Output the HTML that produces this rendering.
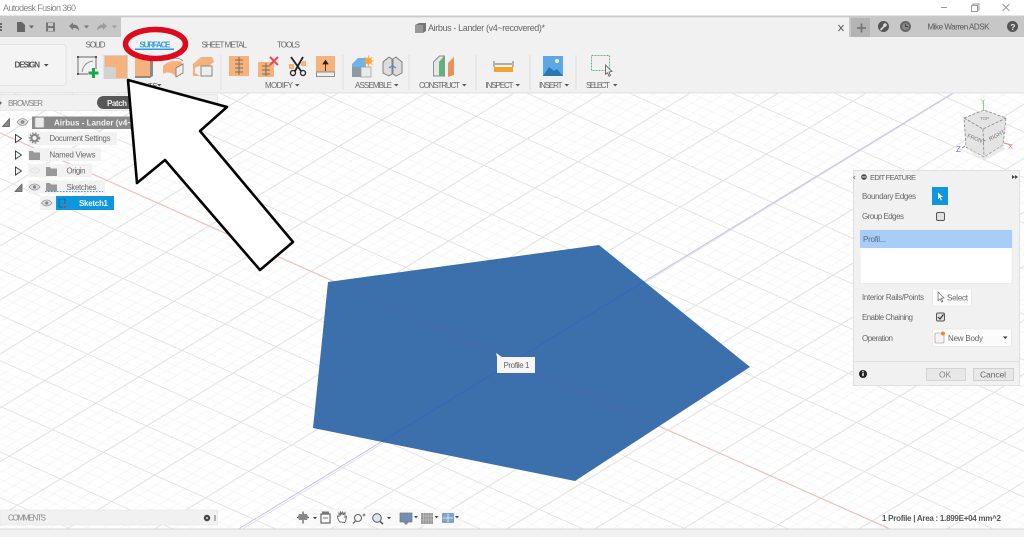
<!DOCTYPE html>
<html><head><meta charset="utf-8"><title>Autodesk Fusion 360</title>
<style>
html,body{margin:0;padding:0;background:#fff;width:1024px;height:537px;overflow:hidden}
svg{display:block;filter:blur(.35px)}
text{font-family:"Liberation Sans",sans-serif;fill:#666;font-size:8px}
</style></head><body>
<svg width="1024" height="537" viewBox="0 0 1024 537" xmlns="http://www.w3.org/2000/svg">
<defs>
<pattern id="g" width="100" height="100" patternUnits="userSpaceOnUse" patternTransform="matrix(.51 .227 -.4314 .2643 80 305)">
<path d="M20 0V100M40 0V100M60 0V100M80 0V100M0 20H100M0 40H100M0 60H100M0 80H100" stroke="#f3f3f3" stroke-width="1.400" fill="none"/>
<path d="M0 0V100M0 0H100M100 0V100M0 100H100" stroke="#e0e0e0" stroke-width="2.200" fill="none"/>
</pattern>
<clipPath id="pc"><polygon points="328,282 599,245 750,367 575,481 313,428"/></clipPath>
</defs>
<rect width="1024" height="537" fill="#fff"/>
<!-- viewport -->
<rect y="92" width="1024" height="437" fill="url(#g)"/>
<line x1="0" y1="133" x2="892" y2="530" stroke="#f5bcbc" stroke-width="1"/>
<line x1="953" y1="93" x2="237" y2="530" stroke="#c2c2f0" stroke-width="1"/>
<polygon points="328,282 599,245 750,367 575,481 313,428" fill="#3c70ad"/>
<g clip-path="url(#pc)">
<line x1="0" y1="133" x2="892" y2="530" stroke="#5a689f" stroke-width="1" opacity=".45"/>
<line x1="953" y1="93" x2="237" y2="530" stroke="#3265bd" stroke-width="1.200" opacity=".7"/>
</g>
<!-- top -->
<text x="3" y="11" style="fill:#8a8a8a;font-size:9px" textLength="73">Autodesk Fusion 360</text>
<path d="M941 7.500H947" stroke="#999" stroke-width="1"/>
<path d="M971.500 5.500h6v6h-6zM973 5.500v-1.500h6v6h-1.500" stroke="#999" fill="none" stroke-width="1"/>
<path d="M1002.500 4l7 7M1009.500 4l-7 7" stroke="#999" fill="none" stroke-width="1"/>
<rect y="15.500" width="1024" height="2" fill="#c9c9c9"/>
<rect y="17" width="121" height="20" fill="#c7c7c7"/>
<rect x="849" y="17" width="175" height="20" fill="#c7c7c7"/>
<rect x="121" y="18" width="728" height="19" fill="#f1f1f1"/>
<rect y="37" width="1024" height="55" fill="#f1f1f1"/>
<rect y="92" width="1024" height="1.500" fill="#e6e6e6"/>
<!-- quick access -->
<path d="M0 23h2v2H0zM0 26h2v2H0zM0 29h2v2H0z" fill="#666"/>
<path d="M17 22h5l3 3v7h-8z" fill="#666"/>
<path d="M29 25.500h5l-2.500 3z" fill="#666"/>
<path d="M46 22.500h9v9h-9z" fill="#777"/><rect x="48" y="23" width="5" height="3" fill="#c7c7c7"/><rect x="48" y="28" width="5" height="3" fill="#c7c7c7"/>
<path d="M69 26l4-3.500v2c4 0 6 2 6 6.500-1.500-2.500-3-3-6-3v2z" fill="#777"/>
<path d="M84 25.500h5l-2.500 3z" fill="#777"/>
<path d="M107 26l-4-3.500v2c-4 0-6 2-6 6.500 1.500-2.500 3-3 6-3v2z" fill="#9c9c9c"/>
<path d="M112 25.500h5l-2.500 3z" fill="#999"/>
<!-- doc title -->
<path d="M415 25l4-2h7v8l-3 2h-8z" fill="#777"/><path d="M415 25h8v8h-8z" fill="#999"/>
<text x="428" y="31" style="font-size:9px;fill:#666" textLength="117">Airbus - Lander (v4~recovered)*</text>
<path d="M838.500 25l5 6M843.500 25l-5 6" stroke="#666" stroke-width="1.100"/>
<rect x="851" y="18" width="19" height="19" fill="#b4b4b4"/>
<path d="M857 28h9M861.500 23.500v9" stroke="#777" stroke-width="1.800"/>
<circle cx="883.500" cy="26.500" r="5.500" fill="#555"/><path d="M880.500 30l4-4" stroke="#ddd" stroke-width="1.600"/><circle cx="885" cy="25" r="1.800" fill="#ddd"/>
<circle cx="905.500" cy="26.500" r="5.500" fill="#666"/><circle cx="905.500" cy="26.500" r="3.500" fill="#888"/><path d="M905.500 24v2.500h2.500" stroke="#333" fill="none" stroke-width=".8"/>
<text x="927.500" y="29.500" style="font-size:8px;fill:#555" textLength="62">Mike Warren ADSK</text>
<circle cx="1012.500" cy="26.500" r="5.500" fill="#555"/><text x="1010.200" y="30" style="font-size:8.500px;font-weight:bold;fill:#eee">?</text>
<!-- tabs -->
<text x="85.500" y="47.500" style="font-size:8px;fill:#666" textLength="20">SOLID</text>
<text x="139.500" y="47.500" style="font-size:8px;fill:#2f9fdb;font-weight:bold" textLength="31">SURFACE</text>
<rect x="135" y="48.500" width="39" height="1.500" fill="#2a9bd8"/>
<text x="201.500" y="47.500" style="font-size:8px;fill:#666" textLength="45.500">SHEET METAL</text>
<text x="277" y="47.500" style="font-size:8px;fill:#666" textLength="23">TOOLS</text>
<!-- design -->
<rect x="-4" y="44.500" width="70" height="41" rx="3" fill="#f4f4f4" stroke="#e3e3e3"/>
<text x="14.500" y="67.500" style="font-size:8px;font-weight:bold;fill:#555" textLength="25.500">DESIGN</text>
<path d="M44 64h4.500l-2.250 2.500z" fill="#444"/>
<!-- separators -->
<path d="M221 55V90M343 55V90M409 55V90M476 55V90M530 55V90M576 55V90" stroke="#dedede" stroke-width="1"/>
<!-- sketch icon -->
<path d="M78 57h18v12M88 74h-10v-17" fill="none" stroke="#666" stroke-width=".9"/>
<path d="M82 72c1-6 4-10 11-11" fill="none" stroke="#777" stroke-width=".8"/>
<path d="M77 56h2v2h-2zM95 56h2v2h-2zM77 73h2v2h-2z" fill="#555"/>
<path d="M93.500 68v10M88.500 73h10" stroke="#1aa64a" stroke-width="3"/>
<!-- patch active -->
<rect x="103.500" y="55" width="24.500" height="24" fill="#d2d2d2"/>
<path d="M105 56h22v22h-11v-11h-11z" fill="#f6b27c"/>
<!-- extrude -->
<path d="M135 57h15v19h-15z" fill="#f6b27c"/><path d="M150 56l3 1v19l-3 2h-15v-2h15z" fill="#8a8a8a"/>
<!-- revolve -->
<path d="M163 66c5-5 12-6 19-4v8l-5 1-1 6c-3-4-8-6-13-3z" fill="#f5b07c"/><path d="M176 68l7-4v9l-7 4z" fill="#eee" stroke="#777" stroke-width=".8"/><path d="M167 60c5-2 12-3 16 1" fill="none" stroke="#888" stroke-width=".8"/>
<!-- loft -->
<path d="M193 64l8-7h11l2 5-5 4h-10l-4 2v5l5 3-7 0z" fill="#f6b27c"/><rect x="201" y="66" width="11" height="10" fill="#eee" stroke="#888"/>
<text x="148" y="88" style="font-size:7.500px;fill:#666">TE</text>
<path d="M157 84h4.500l-2.250 2.500z" fill="#555"/>
<!-- modify -->
<rect x="229" y="56" width="20" height="20" fill="#f6b27c"/>
<path d="M235 60h8M235 64h8M235 68h8M235 72h8M239 57v18" stroke="#7d6a58" stroke-width="1"/>
<rect x="258" y="62" width="16" height="15" fill="#f6b27c"/><path d="M262 66h8M262 70h8M262 74h8M266 63v13" stroke="#7d6a58" stroke-width="1"/>
<path d="M270 57l8 8M278 57l-8 8" stroke="#e8475a" stroke-width="2"/>
<path d="M291 57l10 14M303 57l-8 14" stroke="#222" stroke-width="1.800"/><circle cx="293" cy="73" r="2.500" fill="none" stroke="#222" stroke-width="1.300"/><circle cx="303" cy="73" r="2.500" fill="none" stroke="#222" stroke-width="1.300"/><rect x="289" y="64" width="5" height="5" fill="#f6b27c"/><rect x="301" y="61" width="5" height="5" fill="#f6b27c"/>
<rect x="316" y="56" width="19" height="16" fill="#f6b27c"/><rect x="316.500" y="72" width="18" height="4.500" fill="#eee" stroke="#777" stroke-width=".8"/><path d="M325.500 71v-9M323 64l2.500-3.500 2.500 3.500z" stroke="#222" fill="#222" stroke-width=".8"/>
<text x="265" y="88" style="font-size:8px;fill:#666" textLength="28">MODIFY</text><path d="M295 84h4.500l-2.250 2.500z" fill="#555"/>
<!-- assemble -->
<path d="M352 64l6-6h8v10h-14z" fill="#6fb2ec"/><path d="M352 67h9v10h-9z" fill="#8c9aa6"/><path d="M361 67h10v10h-10z" fill="#eaeaea" stroke="#999" stroke-width=".7"/><circle cx="368.500" cy="61" r="3.500" fill="#f6a83c"/><path d="M368.500 55.500v11M363 61h11M364.500 57l8 8M372.500 57l-8 8" stroke="#f6a83c" stroke-width=".8"/>
<path d="M383 62l6-5 3 2v15l-3 2-6-3z" fill="#ddd" stroke="#777" stroke-width=".9"/><path d="M402 62l-6-5-3 2v15l3 2 6-3z" fill="#ddd" stroke="#777" stroke-width=".9"/><path d="M389 68l3-2M396 68l-3-2" stroke="#4b90d0" stroke-width="1.200"/>
<text x="355" y="88" style="font-size:8px;fill:#666" textLength="37">ASSEMBLE</text><path d="M394 84h4.500l-2.250 2.500z" fill="#555"/>
<!-- construct -->
<path d="M433.500 62l6-6h5v20h-11z" fill="#e7e7e7" stroke="#888" stroke-width=".9"/><path d="M439 62l5-6v20l-5 0z" fill="#5fb37c"/><path d="M448 63l6-6v18l-6 2z" fill="#e8935c"/>
<text x="419" y="88" style="font-size:8px;fill:#666" textLength="41">CONSTRUCT</text><path d="M462 84h4.500l-2.250 2.500z" fill="#555"/>
<!-- inspect -->
<rect x="494" y="67" width="19" height="5" fill="#f2a32f"/><path d="M494 61v6M513 61v6M495 64h17" stroke="#666" stroke-width=".9"/>
<text x="485.500" y="88" style="font-size:8px;fill:#666" textLength="28">INSPECT</text><path d="M515.500 84h4.500l-2.250 2.500z" fill="#555"/>
<!-- insert -->
<rect x="543" y="56" width="20" height="20" fill="#5aa9e6"/><path d="M543 76l6-9 5 4 3-2 6 7z" fill="#2a77b8"/><circle cx="557" cy="61" r="2" fill="#f6e9a0"/>
<text x="539" y="88" style="font-size:8px;fill:#666" textLength="23.500">INSERT</text><path d="M564.500 84h4.500l-2.250 2.500z" fill="#555"/>
<!-- select -->
<rect x="591.500" y="55.500" width="18" height="15" fill="none" stroke="#5dbb85" stroke-width="1" stroke-dasharray="2 1"/>
<path d="M605.500 65l6.500 6.500-3 .5 1.500 3.500-1.500.7-1.500-3.500-2 1.500z" fill="#eee" stroke="#555" stroke-width=".8"/>
<text x="586" y="88" style="font-size:8px;fill:#666" textLength="24">SELECT</text><path d="M613 84h4.500l-2.250 2.500z" fill="#555"/>
<!-- browser panel -->
<rect x="0" y="94.500" width="217.500" height="16" fill="#f1f1f1" stroke="#e2e2e2" stroke-width=".7"/>
<circle cx="0" cy="103" r="1.500" fill="#666"/>
<text x="8" y="106" style="font-size:8px;fill:#888" textLength="35">BROWSER</text>
<rect x="97" y="96" width="68" height="13" rx="6.500" fill="#585858"/>
<text x="107" y="106" style="font-size:8px;font-weight:bold;fill:#eee" textLength="20">Patch</text>
<!-- tree -->
<path d="M2.500 126.500l7-8v8z" fill="#888" stroke="#555" stroke-width=".7"/>
<path d="M17 122c3-4.500 8-4.500 11 0-3 4.500-8 4.500-11 0z" fill="#ddd" stroke="#999" stroke-width=".8"/><circle cx="22.500" cy="122" r="1.800" fill="#888"/>
<rect x="32" y="116.500" width="106" height="12.500" fill="#8a8a8a"/>
<rect x="35" y="117.500" width="9" height="10" rx="1" fill="#eaeaea" stroke="#aaa" stroke-width=".6"/>
<text x="54" y="125.500" style="font-size:8px;font-weight:bold;fill:#f3f3f3" textLength="78">Airbus - Lander (v4~</text>
<rect x="28" y="132" width="89" height="13" fill="#f2f2f2"/>
<path d="M15.500 134.500l6 4-6 4z" fill="#fff" stroke="#333" stroke-width=".9"/>
<circle cx="34.500" cy="138" r="3.200" fill="none" stroke="#888" stroke-width="2.200"/><circle cx="34.500" cy="138" r="5" fill="none" stroke="#888" stroke-width="1.400" stroke-dasharray="1.500 1.500"/>
<text x="49.500" y="141" style="font-size:7.800px;fill:#666" textLength="61">Document Settings</text>
<rect x="28" y="148" width="73" height="13" fill="#f2f2f2"/>
<path d="M15.500 151l6 4-6 4z" fill="#fff" stroke="#333" stroke-width=".9"/>
<path d="M29 151h4l1 1.500h6v7.500h-11z" fill="#999"/>
<text x="49.500" y="157.500" style="font-size:7.800px;fill:#666" textLength="46">Named Views</text>
<rect x="28" y="164" width="64" height="13" fill="#f2f2f2"/>
<path d="M15.500 167l6 4-6 4z" fill="#fff" stroke="#333" stroke-width=".9"/>
<path d="M30 170.500c3-3.500 7-3.500 10 0-3 3.500-7 3.500-10 0z" fill="#eee" stroke="#ddd" stroke-width=".8"/>
<path d="M46 167h4l1 1.500h6v7.500h-11z" fill="#999"/>
<text x="66.500" y="173.500" style="font-size:7.800px;fill:#666" textLength="19">Origin</text>
<rect x="28" y="180.500" width="77" height="13" fill="#f2f2f2"/>
<path d="M15 191.500l7-7.500v7.500z" fill="#888" stroke="#555" stroke-width=".7"/>
<path d="M29 187c3-4 8-4 11 0-3 4-8 4-11 0z" fill="#ddd" stroke="#999" stroke-width=".8"/><circle cx="34.500" cy="187" r="1.600" fill="#888"/>
<path d="M46 183h4l1 1.500h6v7h-11z" fill="#999"/>
<text x="66.500" y="190" style="font-size:7.800px;fill:#666" textLength="30">Sketches</text>
<path d="M45 191.500H103" stroke="#4a8fd0" stroke-width="1" stroke-dasharray="1.500 1.500"/>
<rect x="40" y="196" width="16" height="14" fill="#f2f2f2"/>
<path d="M41.500 203c3-4 7.500-4 10.500 0-3 4-7.500 4-10.500 0z" fill="#ddd" stroke="#999" stroke-width=".8"/><circle cx="46.700" cy="203" r="1.600" fill="#888"/>
<rect x="56" y="196" width="58" height="14" fill="#0e97dd"/>
<path d="M59 199h6v8h-6z" fill="none" stroke="#075b8c" stroke-width=".7"/><path d="M63 207l3-3" stroke="#e8503a" stroke-width="1.500"/>
<text x="79" y="206" style="font-size:8px;font-weight:bold;fill:#f5fbff" textLength="29">Sketch1</text>
<!-- viewcube -->
<path d="M983.500 111v-11" stroke="#6fe07f" stroke-width="1"/>
<text x="980.500" y="104" style="font-size:7px;fill:#7be88a">Y</text>
<path d="M964 118l20-8 22 8-3 27-19 12-18-10z" fill="#e4e4e4"/>
<path d="M964 118l19 11 23-11M983 129l1 28" fill="none" stroke="#888" stroke-width=".8" stroke-dasharray="3 1.500"/>
<path d="M964 118l20-8 22 8-3 27-19 12-18-10z" fill="none" stroke="#888" stroke-width=".8" stroke-dasharray="3 1.500"/>
<path d="M967 147l17 10 19-12 2 4-20 11-12-6z" fill="#dcdcdc" opacity=".6"/>
<text x="967" y="137" transform="rotate(22 967 137)" style="font-size:5.500px;fill:#777">FRONT</text>
<text x="990" y="141" transform="rotate(-28 990 141)" style="font-size:5.500px;fill:#777">RIGHT</text>
<text x="980" y="120" style="font-size:4.500px;fill:#888">TOP</text>
<path d="M1004 143l7 2" stroke="#f27d7d" stroke-width="1"/>
<text x="1008" y="149" style="font-size:7.500px;fill:#f27d7d">X</text>
<path d="M965 146l-3 2" stroke="#6f6ff0" stroke-width="1"/>
<text x="956" y="152" style="font-size:8px;fill:#6f6ff0">Z</text>
<!-- edit panel -->
<rect x="853.500" y="170.500" width="166" height="215" fill="#f1f1f1" stroke="#e0e0e0"/>
<path d="M855 176l-1.500 1.500 1.500 1.500" stroke="#888" fill="none"/>
<circle cx="864" cy="177" r="2.800" fill="#444"/><rect x="862" y="176.500" width="4" height="1" fill="#eee"/>
<text x="870" y="180" style="font-size:7.500px;fill:#666" textLength="46">EDIT FEATURE</text>
<path d="M1012 175l3 2-3 2zM1015 175l3 2-3 2z" fill="#444"/>
<text x="862" y="199" style="font-size:8px;fill:#666" textLength="54">Boundary Edges</text>
<rect x="932" y="187" width="16" height="18" fill="#0f96dc"/>
<path d="M938 192.500l5 4.500-2.300.3 1.200 2.700-1.100.4-1.200-2.700-1.600 1.500z" fill="#fff"/>
<text x="862" y="219" style="font-size:8px;fill:#666" textLength="42">Group Edges</text>
<rect x="936.500" y="212.500" width="8" height="8" rx="1.500" fill="#e0e0e0" stroke="#555"/>
<rect x="860" y="230" width="152" height="53.500" fill="#fff" stroke="#e4e4e4" stroke-width=".6"/>
<rect x="860" y="230" width="152" height="18" fill="#a9cdf9"/>
<text x="863" y="242" style="font-size:8px;fill:#5b6674" textLength="23">Profil...</text>
<text x="862" y="300" style="font-size:7.800px;fill:#666" textLength="62">Interior Rails/Points</text>
<rect x="932.500" y="289" width="39" height="17" fill="#fbfbfb" stroke="#e6e6e6" stroke-width=".7"/>
<path d="M938 292l6 6-2.700.3 1.500 3.300-1.200.6-1.500-3.300-2 1.800z" fill="#fff" stroke="#666" stroke-width=".7"/>
<text x="947" y="300.500" style="font-size:8px;fill:#666" textLength="21">Select</text>
<text x="862" y="320" style="font-size:7.800px;fill:#666" textLength="51">Enable Chaining</text>
<rect x="936.500" y="313" width="8" height="8" rx="1.500" fill="#e0e0e0" stroke="#555"/><path d="M938 317l2 2 3.500-4.500" stroke="#333" fill="none" stroke-width="1.200"/>
<text x="862" y="341" style="font-size:8px;fill:#666" textLength="31">Operation</text>
<rect x="932.500" y="329" width="79" height="17.500" fill="#fbfbfb" stroke="#e6e6e6" stroke-width=".7"/>
<rect x="935" y="333" width="9" height="10" rx="1" fill="#f4f4f4" stroke="#a88" stroke-width=".6"/><circle cx="943" cy="333.500" r="2" fill="#f08a2c"/>
<text x="948" y="341" style="font-size:8px;fill:#666" textLength="35">New Body</text>
<path d="M1003 336.500h4.500l-2.250 2.500z" fill="#333"/>
<path d="M854 361.500H1019" stroke="#e0e0e0"/>
<circle cx="863" cy="374" r="4" fill="#222"/><rect x="862.300" y="373" width="1.400" height="3.200" fill="#fff"/><rect x="862.300" y="371" width="1.400" height="1.300" fill="#fff"/>
<rect x="926.500" y="368.500" width="39" height="12" fill="#e8e8e8" stroke="#d4d4d4"/>
<text x="939" y="377.500" style="font-size:8.500px;fill:#888" textLength="12">OK</text>
<rect x="973.500" y="368.500" width="40" height="12" fill="#e8e8e8" stroke="#d0d0d0"/>
<text x="980" y="377.500" style="font-size:8.500px;fill:#666" textLength="26">Cancel</text>
<!-- tooltip -->
<path d="M497 357l-1-4 6 4z" fill="#f4f4f4"/>
<rect x="497" y="357" width="38" height="16" fill="#f5f5f5"/>
<text x="503.500" y="368" style="font-size:8px;fill:#666" textLength="26">Profile 1</text>
<!-- comments -->
<rect x="0" y="510" width="217.500" height="15" fill="#f1f1f1" stroke="#e4e4e4" stroke-width=".6"/>
<text x="8" y="520.500" style="font-size:8px;fill:#888" textLength="38">COMMENTS</text>
<circle cx="207" cy="518" r="3.200" fill="#444"/><circle cx="207" cy="518" r="1" fill="#ddd"/>
<path d="M215 515v6" stroke="#999" stroke-width="1.500"/>
<!-- nav bar -->
<rect x="296" y="509" width="166" height="17" fill="#f7f7f7" opacity=".8"/>
<path d="M303 511.500v12M297 517.500h12" stroke="#555" stroke-width="1.200"/><path d="M299 514h8l1 3-1 3h-8l-1-3z" fill="#888"/>
<path d="M313 517h4l-2 2.200z" fill="#444"/>
<rect x="321" y="514" width="9" height="9" fill="none" stroke="#666" stroke-width="1.200"/><rect x="322" y="511.500" width="7" height="2.500" fill="#777"/><path d="M323 518h5" stroke="#777"/>
<path d="M340 522c-2-2-2.500-4-2.500-6l1.500.5v-3.500l1.500 2v-3l1.500 2.500.5-3 1 3 1.500-2v5l1.500-1-1 5-1 1z" fill="#fff" stroke="#666" stroke-width=".9"/>
<circle cx="358" cy="518" r="3.500" fill="none" stroke="#666" stroke-width="1.100"/><path d="M355.500 521l-2.500 2.500" stroke="#666" stroke-width="1.300"/><path d="M364 513.500v3M362.500 515h3" stroke="#666" stroke-width=".9"/>
<circle cx="377" cy="518" r="4.300" fill="#dbe7ee" stroke="#666" stroke-width="1.100"/><path d="M380 521.500l3 2.500" stroke="#555" stroke-width="1.500"/>
<path d="M387 517h4l-2 2.200z" fill="#444"/>
<rect x="400" y="513" width="12" height="9" fill="#6f8fb3" stroke="#777" stroke-width=".7"/><path d="M403 522l3 3 3-3z" fill="#888"/>
<path d="M414 516h4l-2 2.200z" fill="#444"/>
<rect x="421" y="513" width="12" height="11" fill="#999"/><path d="M423.500 513v11M426 513v11M428.500 513v11M431 513v11M421 516h12M421 520h12" stroke="#ccc" stroke-width=".5"/>
<path d="M434.500 516h4l-2 2.200z" fill="#444"/>
<rect x="442.500" y="513.500" width="11" height="9" fill="#7ea4d0" stroke="#6a87ad" stroke-width=".7"/><path d="M448 513.500v9M442.500 518h11" stroke="#eef" stroke-width=".8"/>
<path d="M455 516h4l-2 2.200z" fill="#444"/>
<!-- status -->
<text x="882" y="521" style="font-size:8px;font-weight:bold;fill:#555" textLength="119">1 Profile | Area : 1.899E+04 mm^2</text>
<!-- bottom bar -->
<rect y="528.500" width="1024" height="8.500" fill="#f1f1f1"/>
<rect y="528.500" width="1024" height="1" fill="#d9d9d9"/>
<!-- annotations -->
<ellipse cx="155.500" cy="44" rx="30" ry="14.500" fill="none" stroke="#dc0a1e" stroke-width="5.500"/>
<polygon points="128,80 227,107 200,131 293,242 260,270 165,160 137,183" fill="#fff" stroke="#050505" stroke-width="2.600" stroke-linejoin="round"/>
</svg>
</body></html>
